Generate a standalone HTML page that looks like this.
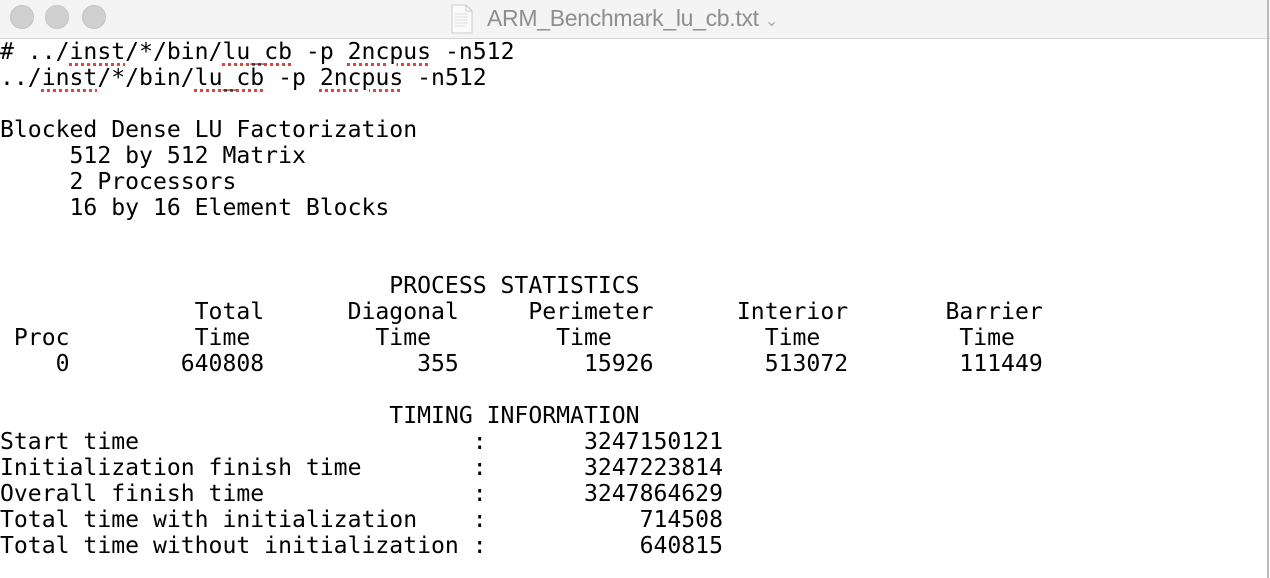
<!DOCTYPE html>
<html><head><style>
html,body{margin:0;padding:0;width:1270px;height:578px;overflow:hidden;background:#fff}
.tb{position:absolute;left:0;top:0;width:1270px;height:38px;background:#f4f4f4;border-bottom:1px solid #d2d2d2}
.c{position:absolute;top:5px;width:24px;height:24px;border-radius:50%;background:#d0d0d0;border:1px solid #c4c4c4;box-sizing:border-box}
.title{position:absolute;left:487px;top:5px;font:23px "Liberation Sans",sans-serif;color:#8e8e8e;letter-spacing:-0.3px}
pre{position:absolute;left:0;top:39px;margin:0;font:23.1px/26px "DejaVu Sans Mono","Liberation Mono",monospace;color:#000}
.s{text-decoration:underline dotted #e0443c;text-decoration-thickness:3px;text-underline-offset:4px}
.sb{position:absolute;left:1267px;top:0;width:2px;height:578px;background:#bbb}
</style></head><body>
<div class="tb">
<div class="c" style="left:10px"></div>
<div class="c" style="left:45px"></div>
<div class="c" style="left:82px"></div>
<svg style="position:absolute;left:450px;top:4px" width="24" height="30" viewBox="0 0 24 30"><path d="M2 1h14l6 6v22H2z" fill="#fafafa" stroke="#ccc"/><path d="M16 1v6h6" fill="none" stroke="#ccc"/><path d="M5 10h13M5 13h13M5 16h13M5 19h13M5 22h10" stroke="#ddd"/></svg>
<div class="title">ARM_Benchmark_lu_cb.txt <span style="font-size:16px;color:#aaa">&#8964;</span></div>
</div>
<div class="sb"></div>
<pre># ../<span class="s">inst</span>/*/bin/<span class="s">lu_cb</span> -p <span class="s">2ncpus</span> -n512
../<span class="s">inst</span>/*/bin/<span class="s">lu_cb</span> -p <span class="s">2ncpus</span> -n512

Blocked Dense LU Factorization
     512 by 512 Matrix
     2 Processors
     16 by 16 Element Blocks


                            PROCESS STATISTICS
              Total      Diagonal     Perimeter      Interior       Barrier
 Proc         Time         Time         Time           Time          Time
    0        640808           355         15926        513072        111449

                            TIMING INFORMATION
Start time                        :       3247150121
Initialization finish time        :       3247223814
Overall finish time               :       3247864629
Total time with initialization    :           714508
Total time without initialization :           640815
</pre>
</body></html>
